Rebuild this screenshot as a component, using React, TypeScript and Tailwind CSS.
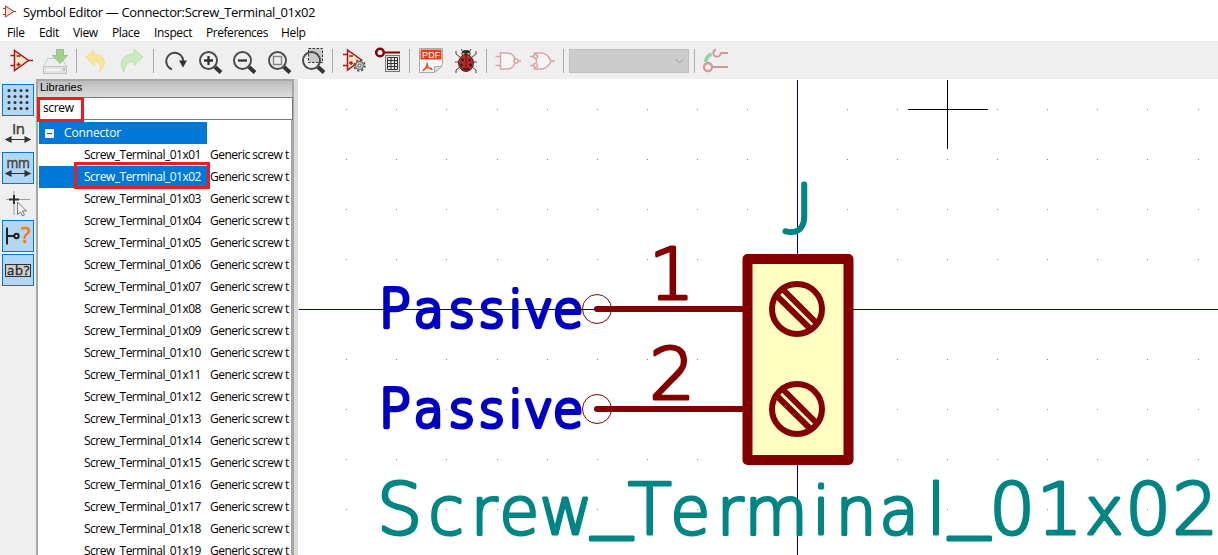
import type { ReactNode } from "react";

type Glyph = [char: string, x: number, size: number, y?: number];

const ROWS = Array.from({ length: 19 }, (_, i) => `Screw_Terminal_01x${String(i + 1).padStart(2, "0")}`);
const GRID_X = [346, 396, 446, 497, 547, 597, 647, 697, 747, 797, 847, 897, 947, 997, 1047, 1097, 1147, 1198];
const GRID_Y = [109, 159, 209, 259, 309, 359, 409, 459, 509];

const NAME: Glyph[] = [
  ["S", 399.5, 72], ["c", 446, 65], ["r", 484, 65], ["e", 519, 65], ["w", 566, 65], ["_", 611.5, 82, 520.5],
  ["T", 649.5, 72], ["e", 690, 65], ["r", 730, 65], ["m", 776, 65], ["i", 821, 65], ["n", 856, 65],
  ["a", 899, 65], ["l", 936, 70], ["_", 969, 82, 520.5], ["0", 1012, 72], ["1", 1059.5, 72], ["x", 1104, 65],
  ["0", 1148, 72], ["2", 1195, 72],
];
const PASSIVE: Glyph[] = [
  ["P", 394.5, 53], ["a", 428.5, 49], ["s", 461.5, 49], ["s", 491.5, 49], ["i", 515.5, 49], ["v", 538, 49], ["e", 568, 49],
];

function Label({ glyphs, y, sx, cls }: { glyphs: Glyph[]; y: number; sx: number; cls: string }) {
  return (
    <text
      transform={`scale(${sx} 1)`}
      textAnchor="middle"
      strokeLinejoin="round"
      className={`[vector-effect:non-scaling-stroke] ${cls}`}
    >
      {glyphs.map(([c, x, size, gy], i) => (
        <tspan key={i} x={x / sx} y={gy ?? y} fontSize={size}>
          {c}
        </tspan>
      ))}
    </text>
  );
}

function Slot({ children, cls = "w-[34px]" }: { children: ReactNode; cls?: string }) {
  return (
    <div className={`flex h-[38px] shrink-0 items-center justify-center pt-[2px] ${cls}`}>
      <svg width="28" height="28" viewBox="0 0 28 28" fill="none">
        {children}
      </svg>
    </div>
  );
}

const Sep = ({ cls }: { cls: string }) => <div className={`mt-px h-6 w-px shrink-0 bg-[#ababab] ${cls}`} />;

function Lens({ children }: { children?: ReactNode }) {
  return (
    <>
      <path d="M19 20l6 5.5" stroke="#333" strokeWidth="4" />
      <circle cx="12.5" cy="13.5" r="8.5" stroke="#4a4a4a" strokeWidth="1.9" />
      {children}
    </>
  );
}

function OpAmp() {
  return (
    <>
      <path d="M3.5 8.5h5M3.5 18.5h5M21 13.5h5" stroke="#b01515" strokeWidth="1.4" />
      <path d="M7.5 3.5v20l14-10z" fill="#f6e8c8" stroke="#b01515" strokeWidth="1.5" />
      <path d="M9.500 9h4M9.500 17.500h4M11.500 15.500v4" stroke="#b01515" strokeWidth="1.300" />
    </>
  );
}

function Screw({ y }: { y: number }) {
  return (
    <g transform={`translate(797 ${y})`} stroke="#840000" strokeWidth="6" strokeLinecap="round" fill="none">
      <circle r="25" />
      <path d="M-12.500 -18L18 12.500M-19 -12L12 18.500" />
    </g>
  );
}

function Pin({ y }: { y: number }) {
  return (
    <g stroke="#840000" fill="none">
      <circle cx="597" cy={y} r="14.5" strokeWidth="1" />
      <path d={`M597 ${y}H745`} strokeWidth="6" strokeLinecap="round" />
    </g>
  );
}

function Tool({ on, children }: { on?: boolean; children: ReactNode }) {
  return (
    <div className={`flex size-8 items-center justify-center ${on ? "border border-[#0078d7] bg-[#b3d7f3]" : ""}`}>
      <svg width="30" height="30" viewBox="0 0 30 30" fill="none" className="shrink-0">
        {children}
      </svg>
    </div>
  );
}

const Arrows = () => (
  <path d="M6 20.500h18M8 18v5l-5-2.500zM22 18v5l5-2.500z" stroke="#333" strokeWidth="1.100" fill="#333" />
);

function Toolbar() {
  return (
    <div className="flex h-[38px] items-center bg-[#efefef] pl-1">
      <Slot><OpAmp /></Slot>
      <Slot>
        <g opacity=".65">
          <path d="M7 11.500h14l4.500 8v7h-23v-7z" fill="#eee" stroke="#b5b5b5" />
          <path d="M2.500 19.500h23v7h-23z" fill="#dcdcdc" stroke="#a9a9a9" />
          <path d="M5 23h14" stroke="#fff" strokeWidth="1.500" />
          <path d="M22 22.500h2" stroke="#4caf50" strokeWidth="2" />
          <path d="M15.500 2.500h7v6h4l-7.500 8-7.500-8h4z" fill="#7cc05a" stroke="#69a84a" />
        </g>
      </Slot>
      <Sep cls="ml-[4px] mr-[2px]" />
      <Slot><path d="M4 10l8-7v4.500c11 0 14 9 5 17.500 3-7 1-10-5-10v3.500z" fill="#f9e59a" stroke="#f0dc98" /></Slot>
      <Slot cls="w-[35px]"><path d="M26 10l-9-8v5C6 7 1 15 7 25c0-7 4-10.500 10-10.500v4z" fill="#c9ebbf" stroke="#b9e0ae" /></Slot>
      <Sep cls="ml-[5px] mr-[4px]" />
      <Slot>
        <path d="M11 22.300A8.500 8.500 0 1 1 22.200 14" stroke="#444" strokeWidth="1.900" />
        <path d="M18 13.500h8l-4 7z" fill="#333" />
      </Slot>
      <Slot cls="w-[35px]"><Lens><path d="M8 13.500h9M12.500 9v9" stroke="#333" strokeWidth="2.300" /></Lens></Slot>
      <Slot><Lens><path d="M8 13.500h9" stroke="#333" strokeWidth="2.300" /></Lens></Slot>
      <Slot cls="w-[35px]"><Lens><rect x="8.500" y="9.500" width="8" height="8" stroke="#888" strokeWidth="1.500" /></Lens></Slot>
      <Slot>
        <rect x="9.500" y="1.500" width="14" height="14" fill="#c9c9c9" />
        <Lens />
        <rect x="9.500" y="1.500" width="14" height="14" stroke="#333" strokeDasharray="2.500 1.500" />
      </Slot>
      <Sep cls="ml-[2px] mr-[4px]" />
      <Slot>
        <path d="M3 7.500h5M3 18.500h5" stroke="#b01515" strokeWidth="1.400" />
        <path d="M7.500 3v20l14-10z" fill="#f6e8c8" stroke="#b01515" strokeWidth="1.500" />
        <path d="M9 9h4M9 16h4M11 14v4" stroke="#b01515" strokeWidth="1.300" />
        <circle cx="19.500" cy="18.500" r="5.300" stroke="#555" strokeWidth="1.800" strokeDasharray="2.200 1.960" />
        <circle cx="19.500" cy="18.500" r="4" fill="#ccc" stroke="#555" />
        <circle cx="19.500" cy="18.500" r="1.500" fill="#efefef" stroke="#555" />
      </Slot>
      <Slot cls="w-[36px]">
        <path d="M10 5.500h15" stroke="#840000" strokeWidth="2" />
        <circle cx="5" cy="5.500" r="3.800" stroke="#840000" strokeWidth="2.500" />
        <rect x="10.500" y="8.500" width="14" height="16" fill="#e8e8e8" stroke="#777" />
        <path d="M12.500 10.500h10v12h-10zM12.500 13.500h10M12.500 16.500h10M12.500 19.500h10M16 10.500v12M19.500 10.500v12" stroke="#333" />
      </Slot>
      <Sep cls="ml-[2px] mr-[4px]" />
      <Slot>
        <path d="M2.500 1.500h23v16l-8 8h-15z" fill="#f7f7f7" stroke="#aaa" />
        <rect x="3.500" y="2.500" width="21" height="10" fill="#e8401c" />
        <text x="14" y="10.500" textAnchor="middle" fontSize="9" textLength="18" className="fill-white font-['Liberation_Sans']">PDF</text>
        <path d="M5.500 24c3-1.500 5-6 4.500-8.500M10 17c.5 3 3 5 5.500 5.500M6.500 22.500c3-2 5.500-2 8.500-1" stroke="#e8401c" strokeWidth="1.300" />
        <path d="M17.500 25.500v-6h7.500z" fill="#ddd" stroke="#aaa" />
      </Slot>
      <Slot cls="w-[36px]">
        <path d="M8 10L4 7V4M20 10l4-3V4M7 15H3M21 15h4M8 20l-4 3v3M20 20l4 3v3M11 5L9 2M17 5l2-3" stroke="#4a4444" />
        <ellipse cx="14" cy="6.500" rx="4.500" ry="3.500" fill="#2e2e2e" />
        <path d="M10.500 7h2M15.500 7h2" stroke="#d8d86a" strokeWidth="2" />
        <ellipse cx="14" cy="16" rx="7.500" ry="8.500" fill="#c62828" stroke="#5b2020" />
        <path d="M14 8v16" stroke="#501010" />
        <g fill="#222"><circle cx="10.500" cy="13" r="1.500" /><circle cx="17.500" cy="13" r="1.500" /><circle cx="9.500" cy="18" r="1.500" /><circle cx="18.500" cy="18" r="1.500" /><circle cx="12" cy="22" r="1.300" /><circle cx="16" cy="22" r="1.300" /></g>
      </Slot>
      <Sep cls="ml-[2px] mr-[4px]" />
      <Slot>
        <path d="M1.500 9.500h5M1.500 18.500h5M24 14h3M6.500 6h7a7.500 8 0 0 1 0 16h-7z" stroke="#d9a5a5" strokeWidth="1.500" fill="#f8f5f5" />
        <circle cx="22" cy="14" r="2" stroke="#d9a5a5" strokeWidth="1.500" fill="#f8f5f5" />
      </Slot>
      <Slot cls="w-[36px]">
        <path d="M1 9.500h4M1 18.500h4M22 14h4M5.500 6H13q6 1 9 8-3 7-9 8H5.500q4-8 0-16z" stroke="#d9a5a5" strokeWidth="1.500" fill="#f8f5f5" />
        <circle cx="6.500" cy="9.500" r="2" stroke="#d9a5a5" strokeWidth="1.500" fill="#f8f5f5" />
        <circle cx="6.500" cy="18.500" r="2" stroke="#d9a5a5" strokeWidth="1.500" fill="#f8f5f5" />
      </Slot>
      <Sep cls="ml-[2px] mr-[5px]" />
      <div className="mt-[2px] flex h-6 w-[120px] shrink-0 items-center justify-end border border-[#bfbfbf] bg-[#cccccc] pr-1">
        <svg width="9" height="6" viewBox="0 0 9 6" fill="none"><path d="M.5 1l4 4 4-4" stroke="#9a9a9a" /></svg>
      </div>
      <Sep cls="ml-[5px] mr-[4px]" />
      <Slot>
        <path d="M17 6h9M9 20h17" stroke="#d09898" strokeWidth="2" />
        <path d="M3.500 15c1-5 3-7 6-8" stroke="#8fd3a4" strokeWidth="3.500" />
        <circle cx="15" cy="6" r="3.700" stroke="#d09898" strokeWidth="2" fill="#efefef" strokeDasharray="16 6" />
        <circle cx="6" cy="20" r="4" stroke="#d09898" strokeWidth="2.300" fill="#efefef" />
      </Slot>
    </div>
  );
}

function Sidebar() {
  return (
    <div className="flex w-9 shrink-0 flex-col gap-0.5 bg-[#efefef] pl-0.5 pt-[5px]">
      <Tool on>
        {[5, 11, 17, 23].flatMap((y) => [6, 12, 18, 24].map((x) => <circle key={`${x}-${y}`} cx={x} cy={y + 0.5} r="1.500" fill="#333" />))}
      </Tool>
      <Tool>
        <text x="15.500" y="15" textAnchor="middle" fontSize="15" className="fill-[#444] stroke-[#444] stroke-[0.5] font-['Open_Sans']">in</text>
        <Arrows />
      </Tool>
      <Tool on>
        <text x="15" y="15" textAnchor="middle" fontSize="14.500" textLength="23" lengthAdjust="spacingAndGlyphs" className="fill-[#444] stroke-[#444] stroke-[0.5] font-['Open_Sans']">mm</text>
        <Arrows />
      </Tool>
      <Tool>
        <path d="M3 12.500h24M11 4v24" stroke="#999" />
        <path d="M6 12.500h10M11 8v9" stroke="#333" strokeWidth="2" />
        <path d="M14.500 15v12.500l3-2.500 2 4 2-1-2-4h4z" fill="#f4f4f4" stroke="#777" />
      </Tool>
      <Tool on>
        <path d="M4 6.500v17M4 15h7" stroke="#222" strokeWidth="2" />
        <circle cx="13.500" cy="15" r="2.200" stroke="#222" strokeWidth="2" />
        <text x="22.500" y="22" textAnchor="middle" fontSize="21" className="fill-[#ff7300] stroke-[#ff7300] stroke-[0.7] font-['Open_Sans']">?</text>
      </Tool>
      <Tool on>
        <rect x="2.500" y="9.500" width="25" height="12" fill="#ccc" stroke="#333" />
        <text x="15" y="20" textAnchor="middle" fontSize="13" textLength="22" className="fill-[#222] stroke-[#222] stroke-[0.3] font-['Open_Sans']">ab?</text>
      </Tool>
    </div>
  );
}

function Libraries() {
  return (
    <div className="flex w-[262px] shrink-0 border-r-4 border-[#dadada] bg-white">
      <div className="relative flex w-[258px] flex-col border-x-2 border-t-2 border-[#a6a6a6]">
        <div className="h-4 bg-linear-to-b from-[#bdbdbd] to-[#dcdcdc] pl-[2px] font-['Liberation_Sans'] text-[11px] leading-[12px] tracking-[0] text-black">Libraries</div>
        <div className="-ml-px -mr-px flex h-[23px] items-center border border-[#7a7a7a] pb-px pl-[5px] leading-none">screw</div>
        <div className="flex flex-1 flex-col overflow-hidden border-r border-[#a6a6a6] pl-px pt-[2px]">
          <div className="flex h-[22px] w-[168px] shrink-0 items-center gap-[10px] bg-[#0078d7] pl-[6px] text-white">
            <span className="flex size-[9px] items-center justify-center bg-[#f2f2f2]"><span className="h-px w-[5px] bg-[#2b4a90]" /></span>
            <span className="tracking-[-0.15px]">Connector</span>
          </div>
          {ROWS.map((name, i) => (
            <div key={name} className="flex h-[22px] shrink-0 items-center whitespace-nowrap">
              <div className={`flex h-full w-[168px] items-center pl-[45px] tracking-[-0.5px] ${i === 1 ? "bg-[#0078d7] text-white" : ""}`}>{name}</div>
              <div className="pl-[3px] tracking-[-0.5px]">Generic screw t</div>
            </div>
          ))}
        </div>
        <div className="absolute -left-px top-[16px] h-[25px] w-[47px] border-3 border-[#ed1c24]" />
        <div className="absolute left-[36px] top-[81px] h-[27px] w-[136px] border-3 border-[#ed1c24]" />
      </div>
    </div>
  );
}

function Canvas() {
  return (
    <svg width="920" height="476" viewBox="298 79 920 476" className="shrink-0 bg-white font-['DejaVu_Sans'] font-extralight">
      <g fill="#848484" shapeRendering="crispEdges">
        {GRID_X.flatMap((x) => GRID_Y.map((y) => <rect key={`${x}-${y}`} x={x} y={y} width="1" height="1" />))}
      </g>
      <path d="M299 309.500H1218M797.500 80V555" stroke="#000084" />
      <path d="M908 109.500h80M947.500 80v69" stroke="#000" />
      <rect x="747.500" y="259" width="101" height="201" fill="#ffffc2" stroke="#840000" strokeWidth="10" strokeLinejoin="round" />
      <Screw y={309} />
      <Screw y={409} />
      <Pin y={309} />
      <Pin y={409} />
      <Label glyphs={PASSIVE} y={327} sx={1} cls="fill-[#0000c2] stroke-[#0000c2] stroke-[4]" />
      <Label glyphs={PASSIVE} y={427} sx={1} cls="fill-[#0000c2] stroke-[#0000c2] stroke-[4]" />
      <Label glyphs={[["1", 671.5, 72]]} y={298.500} sx={1} cls="fill-[#840000] stroke-[#840000] stroke-[3]" />
      <Label glyphs={[["2", 672, 72]]} y={398.500} sx={1} cls="fill-[#840000] stroke-[#840000] stroke-[3]" />
      <Label glyphs={[["J", 798, 69]]} y={232} sx={1} cls="fill-[#008484] stroke-[#008484] stroke-[5.2] font-['Lato'] font-thin" />
      <Label glyphs={NAME} y={533.500} sx={1} cls="fill-[#008484] stroke-[#008484] stroke-[3]" />
    </svg>
  );
}

export default function App() {
  return (
    <div className="h-[555px] w-[1218px] overflow-hidden bg-white font-['Open_Sans',sans-serif] text-[12px] tracking-[-0.35px] text-black">
      <div className="flex h-6 items-center pl-[3px]">
        <svg width="14" height="16" viewBox="0 0 14 16" fill="none" className="mr-[6px]">
          <path d="M0 4.500h3M0 10.500h3M10 7.500h3" stroke="#b03030" />
          <path d="M2.500 2v11l8.500-5.500z" fill="#f6e3c8" stroke="#b03030" />
        </svg>
        <span className="whitespace-nowrap pt-px text-[13px] tracking-[-0.35px]">Symbol Editor — Connector:Screw_Terminal_01x02</span>
      </div>
      <div className="flex h-[17px] items-center pl-[7px]">
        <span className="w-8">File</span>
        <span className="w-[34px]">Edit</span>
        <span className="w-[39px]">View</span>
        <span className="w-[42px]">Place</span>
        <span className="w-[52px]">Inspect</span>
        <span className="w-[75px] tracking-[-0.45px]">Preferences</span>
        <span>Help</span>
      </div>
      <Toolbar />
      <div className="flex h-[476px]">
        <Sidebar />
        <Libraries />
        <Canvas />
      </div>
    </div>
  );
}
